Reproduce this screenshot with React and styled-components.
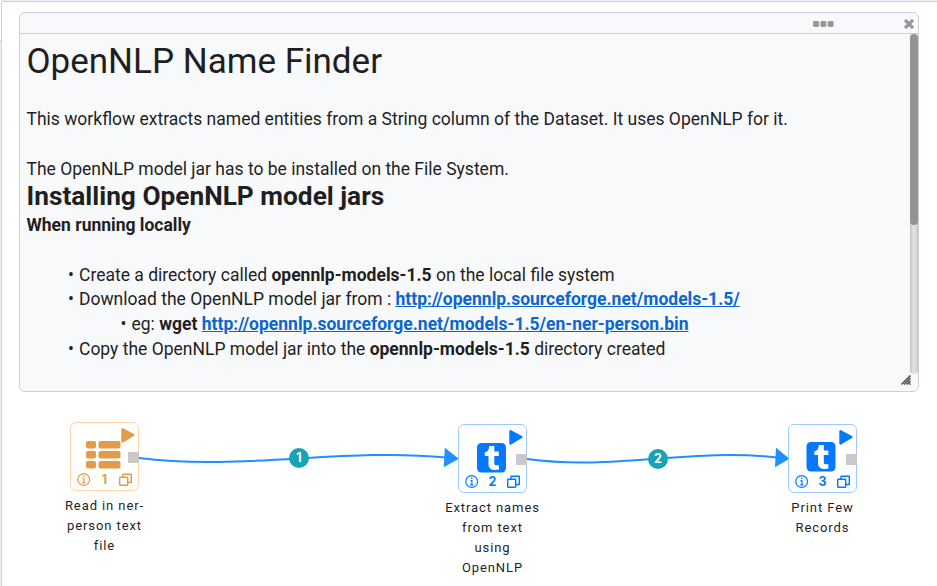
import React from "react";
import styled, { createGlobalStyle } from "styled-components";

const Global = createGlobalStyle`
  *, *::before, *::after { box-sizing: border-box; }
  body { margin: 0; background: #fff; font-family: Roboto, sans-serif; color: #1f1f1f; overflow: hidden; }
`;

const Page = styled.div`
  display: flex;
  width: 937px;
  height: 586px;
  border-top: 1px solid #f0f0fc;
  background: #fff;
`;

const Rail = styled.div`
  flex: none;
  width: 2px;
  margin-top: 1px;
  border-right: 1px solid #cfcfe2;
  background: linear-gradient(#fff 38px, #cfcfe2 38px 39px, #eeeefb 39px);
`;

const Main = styled.main`
  flex: 1;
  display: flex;
  flex-direction: column;
  border-top: 1px solid #cdcde0;
`;

const Note = styled.section`
  display: flex;
  flex-direction: column;
  width: 900px;
  height: 380px;
  margin: 10px 0 0 17px;
  border: 1px solid #cbced9;
  border-radius: 6px;
  background: #f8f9fb;
`;

const NoteHeader = styled.header`
  display: flex;
  justify-content: flex-end;
  align-items: center;
  height: 21px;
  padding: 1px 4px 0 0;
  border-bottom: 1px solid #cbced9;
  gap: 70px;
  flex: none;
`;

const NoteBody = styled.div`
  flex: 1;
  display: flex;
  justify-content: space-between;
`;

const Copy = styled.div`
  padding: 8px 0 0 6.5px;
  font-size: 17.5px;
  line-height: 25px;
  white-space: nowrap;
`;

const Title = styled.h1`
  margin: 0 0 25px;
  font-size: 35px;
  line-height: 40px;
  font-weight: 400;
`;

const Paragraph = styled.p`
  margin: 0 0 ${(p) => p.$gap || 0}px;
`;

const Heading = styled.h2`
  margin: -1px 0 1px;
  font-size: 26.25px;
  line-height: 31px;
  font-weight: 700;
`;

const Subheading = styled.h3`
  margin: 0 0 25px;
  font-size: 17.5px;
  line-height: 25px;
  font-weight: 700;
`;

const List = styled.ul`
  list-style: none;
  margin: 0;
  padding: 0 0 0 ${(p) => p.$indent}px;
  line-height: 25px;
`;

const Item = styled.li`
  margin-bottom: ${(p) => (p.$tight ? -1 : 0)}px;
  &::before { content: "•"; display: inline-block; width: 12px; padding-left: 1px; line-height: 14px; }
`;

const Link = styled.a`
  color: #0a66d0;
  font-weight: 700;
  text-decoration: underline;
`;

const Gutter = styled.div`
  display: flex;
  flex-direction: column;
  align-items: flex-end;
  width: 16px;
`;

const Track = styled.div`
  width: 8px;
  height: 340px;
  border-radius: 4px;
  background: linear-gradient(90deg, #c2c2c2, #dedede 35%, #e0e0e0 65%, #c4c4c4);
`;

const Thumb = styled.div`
  height: 191px;
  border-radius: 4px;
  background: #949494;
`;

const Grip = styled.svg`
  display: block;
  margin: 1px 7px 0 0;
`;

const Canvas = styled.div`
  position: relative;
  flex: 1;
`;

const Wires = styled.svg`
  position: absolute;
  left: -2px;
  top: -392px;
`;

const Node = styled.div`
  position: absolute;
  left: ${(p) => p.$x}px;
  top: ${(p) => p.$y}px;
  width: 100px;
  display: flex;
  flex-direction: column;
  align-items: center;
  color: ${(p) => p.$color};
`;

const Card = styled.div`
  width: 69px;
  height: 69px;
  border: 1px solid ${(p) => p.$border};
  border-radius: 6px;
  background: #fff;
`;

const Art = styled.svg`
  display: block;
  overflow: visible;
`;

const Caption = styled.div`
  margin-top: 5px;
  padding-left: 1px;
  font-size: 13px;
  line-height: 20px;
  letter-spacing: 0.91px;
  text-align: center;
  white-space: nowrap;
  color: #1f1f1f;
`;

const Badge = styled.div`
  position: absolute;
  left: ${(p) => p.$x}px;
  top: ${(p) => p.$y}px;
  width: 20px;
  height: 20px;
  border-radius: 50%;
  background: #19a1b4;
  color: #fff;
  font: 700 12.5px/20px Inter, sans-serif;
  text-align: center;
`;

const NodeArt = ({ kind, number, dx = 0, dy = 0 }) => (
  <Art width="67" height="67" viewBox="1 1 67 67">
    {kind === "table" ? (
      <g fill="#e39b48">
        {[19, 29, 39].map((y) => (
          <g key={y}>
            <rect x="16" y={y} width="10" height="7.5" rx="2" />
            <rect x="28.5" y={y} width="22" height="7.5" rx="2" />
          </g>
        ))}
      </g>
    ) : (
      <g transform={`translate(${dx} ${dy})`}>
        <rect x="19" y="19" width="29" height="29.5" rx="4.5" fill="#0479ff" />
        <path d="M31.4 22h4.9v5.6h4.5v4.5h-4.5v6.8c0 2.2 1.1 2.8 4.6 2.3v4.4c-6.4 1.1-10.4-.6-10.4-5.7v-7.8h-3.7v-3.5c2.8-.9 4.2-2.7 4.6-6.6z" fill="#fff" />
      </g>
    )}
    <path d="M52.5 7.2v12.4L63.3 13z" fill="currentColor" stroke="currentColor" strokeWidth="2.4" strokeLinejoin="round" />
    <rect x="58" y="30" width="11" height="11" fill="#c9c9c9" />
    <g fill="none" stroke="currentColor" strokeWidth="1.2">
      <circle cx="13.7" cy="57.5" r="5.9" />
      <path d="M12.4 56.6h1.5v4M12.2 60.8h3.3" />
      <path d="M13.1 54.2h1.3" strokeWidth="1.5" />
      <rect x="49.7" y="55.2" width="8" height="8" rx="0.6" strokeWidth="1.4" />
      <path d="M53 55v-2.8h8.3v8.3h-3.4" strokeWidth="1.4" strokeLinejoin="round" />
    </g>
    <text x="34.5" y="62" fill="currentColor" fontFamily="Inter, sans-serif" fontWeight="700" fontSize="12.5" textAnchor="middle">{number}</text>
  </Art>
);

const nodes = [
  { x: 52, y: 30, kind: "table", color: "#e39b48", border: "#fdd6aa", lines: ["Read in ner-", "person text", "file"] },
  { x: 440, y: 32, kind: "text", color: "#0479ff", border: "#9dc9fc", lines: ["Extract names", "from text", "using", "OpenNLP"] },
  { x: 770, y: 32, kind: "text", dx: -0.5, dy: -1, color: "#0479ff", border: "#9dc9fc", lines: ["Print Few", "Records"] },
];

export default function App() {
  return (
    <>
      <Global />
      <Page>
        <Rail />
        <Main>
          <Note>
            <NoteHeader>
              <svg width="21" height="6" fill="#989898">
                <rect x="0" y="0" width="6" height="6" rx="1.4" />
                <rect x="7.3" y="0" width="6" height="6" rx="1.4" />
                <rect x="14.6" y="0" width="6" height="6" rx="1.4" />
              </svg>
              <svg width="10" height="10" stroke="#989898" strokeWidth="3.1">
                <path d="M1 1l8 8M9 1l-8 8" />
              </svg>
            </NoteHeader>
            <NoteBody>
              <Copy>
                <Title>OpenNLP Name Finder</Title>
                <Paragraph $gap={25}>This workflow extracts named entities from a String column of the Dataset. It uses OpenNLP for it.</Paragraph>
                <Paragraph>The OpenNLP model jar has to be installed on the File System.</Paragraph>
                <Heading>Installing OpenNLP model jars</Heading>
                <Subheading>When running locally</Subheading>
                <List $indent={40.5}>
                  <Item $tight>Create a directory called <b>opennlp-models-1.5</b> on the local file system</Item>
                  <Item>Download the OpenNLP model jar from : <Link>http://opennlp.sourceforge.net/models-1.5/</Link></Item>
                  <List $indent={52.5}>
                    <Item>eg: <b>wget</b> <Link>http://opennlp.sourceforge.net/models-1.5/en-ner-person.bin</Link></Item>
                  </List>
                  <Item>Copy the OpenNLP model jar into the <b>opennlp-models-1.5</b> directory created</Item>
                </List>
              </Copy>
              <Gutter>
                <Track><Thumb /></Track>
                <Grip width="10" height="10" stroke="#555" strokeWidth="1.6">
                  <path d="M0.5 9.5L9.5 0.5M3.3 9.5L9.5 3.3M6 9.5L9.5 6M8.5 9.5l1-1" />
                </Grip>
              </Gutter>
            </NoteBody>
          </Note>
          <Canvas>
            <Wires width="937" height="586" fill="none" stroke="#1e90ff" strokeWidth="2">
              <path d="M139 458C240 471 345 447.5 446 457.5" />
              <path d="M527 459C614 471 690 447.5 777 457.5" />
              <path d="M444.8 447.8l-1 19.4 15-8.4zM776 447.8l-1 19.4 14.5-8.4z" fill="#1e90ff" stroke="none" />
            </Wires>
            {nodes.map((n, i) => (
              <Node key={i} $x={n.x} $y={n.y} $color={n.color}>
                <Card $border={n.border}>
                  <NodeArt kind={n.kind} number={i + 1} dx={n.dx} dy={n.dy} />
                </Card>
                <Caption>{n.lines.map((l) => <div key={l}>{l}</div>)}</Caption>
              </Node>
            ))}
            <Badge $x={287} $y={56}>1</Badge>
            <Badge $x={646} $y={57}>2</Badge>
          </Canvas>
        </Main>
      </Page>
    </>
  );
}
